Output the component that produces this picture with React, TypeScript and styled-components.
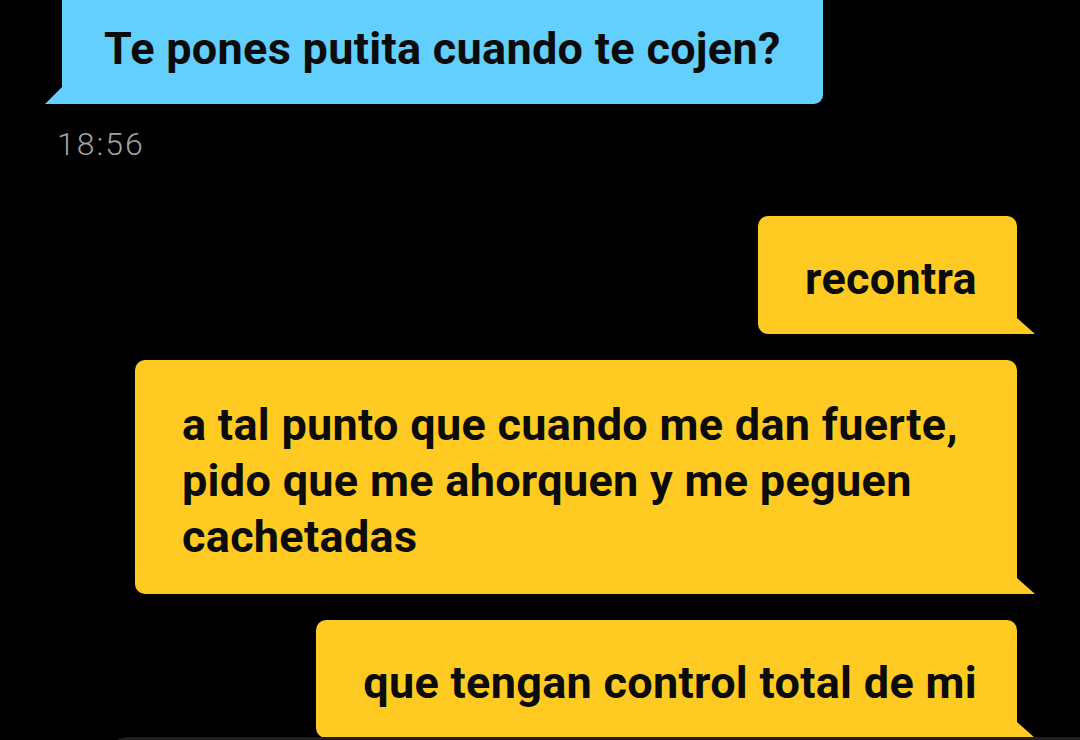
import React from "react";
import styled, { createGlobalStyle } from "styled-components";

const GlobalStyle = createGlobalStyle`
  html, body {
    margin: 0;
    padding: 0;
    background: #000;
  }
  body {
    font-family: Roboto, "Noto Sans", "Liberation Sans", sans-serif;
    overflow: hidden;
  }
`;

const Screen = styled.div`
  width: 1080px;
  height: 740px;
  background: #000;
  display: flex;
  flex-direction: column;
  overflow: hidden;
  position: relative;
`;

const Received = styled.div`
  position: relative;
  align-self: flex-start;
  margin-left: 62px;
  background: #63cffd;
  color: #0b0b0b;
  font-size: 45px;
  font-weight: 700;
  letter-spacing: 0.3px;
  line-height: 56px;
  padding: 21px 42px 27px 42px;
  border-radius: 0 0 9px 0;

  &::before {
    content: "";
    position: absolute;
    left: -17px;
    bottom: 0;
    border-bottom: 17px solid #63cffd;
    border-left: 17px solid transparent;
  }
`;

const Time = styled.div`
  margin: 20px 0 0 57px;
  color: #a2a2a2;
  font-size: 32px;
  font-weight: 300;
  letter-spacing: 2px;
  line-height: 40px;
`;

const Sent = styled.div<{ $top: number }>`
  position: relative;
  align-self: flex-end;
  margin: ${(p) => p.$top}px 63px 0 0;
  background: #ffcb22;
  color: #0b0b0b;
  font-size: 45px;
  font-weight: 700;
  letter-spacing: 0.3px;
  line-height: 56px;
  padding: 35px 40px 27px 47px;
  border-radius: 10px 10px 0 10px;

  &::after {
    content: "";
    position: absolute;
    right: -18px;
    bottom: 0;
    border-bottom: 16px solid #ffcb22;
    border-right: 18px solid transparent;
  }
`;

const Wide = styled(Sent)`
  width: 882px;
  box-sizing: border-box;
  padding-top: 37px;
  padding-bottom: 29px;
`;

const InputBar = styled.div`
  position: absolute;
  left: 100px;
  right: 0;
  bottom: -30px;
  height: 33px;
  background: #1f1f1f;
  border-radius: 30px 0 0 0;
`;

export default function App() {
  return (
    <Screen>
      <GlobalStyle />
      <Received>Te pones putita cuando te cojen?</Received>
      <Time>18:56</Time>
      <Sent $top={52}>recontra</Sent>
      <Wide $top={26}>
        a tal punto que cuando me dan fuerte, pido que me ahorquen y me peguen
        cachetadas
      </Wide>
      <Sent $top={26}>que tengan control total de mi</Sent>
      <InputBar />
    </Screen>
  );
}
